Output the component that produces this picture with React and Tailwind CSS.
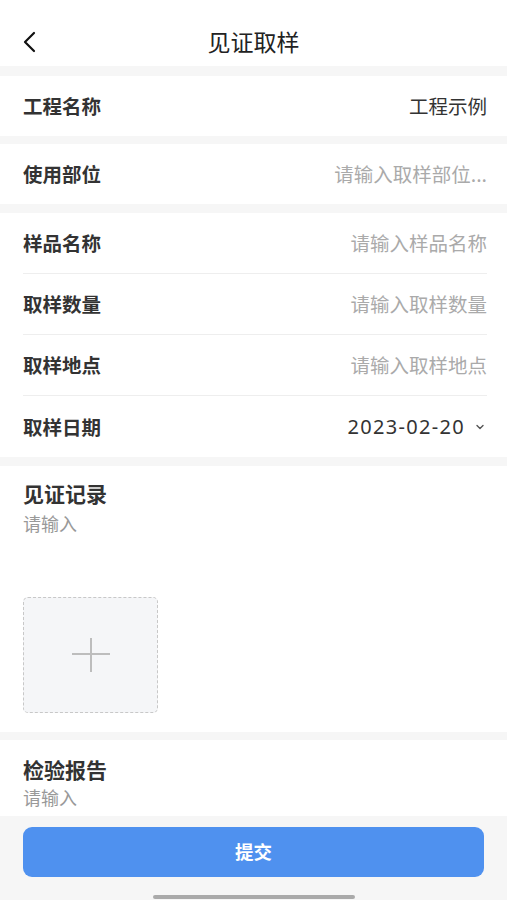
import React from 'react';

const FONT = { fontFamily: '"Noto Sans CJK SC", "Noto Sans", sans-serif' };

const Chevron = () => (
  <svg width="10" height="10" viewBox="0 0 10 10" className="ml-[10px] mr-[2px] text-[#555]">
    <path d="M2 3.5 L5 6.5 L8 3.5" fill="none" stroke="currentColor" strokeWidth="1.4" strokeLinecap="round" strokeLinejoin="round" />
  </svg>
);

const Row = ({ label, value, placeholder, last, h = 'h-[61px]', children }) => (
  <div className="pl-[23px] pr-[20px]">
    <div className={`${h} flex items-center justify-between ${last ? '' : 'border-b border-[#eeeeee]'}`}>
      <span className="text-[19.5px] font-bold text-[#333]">{label}</span>
      {children ? children : value ? (
        <span className="text-[19.5px] text-[#333]">{value}</span>
      ) : (
        <span className="text-[19.5px] text-[#aaa]">{placeholder}</span>
      )}
    </div>
  </div>
);

export default function App() {
  return (
    <div className="w-[507px] h-[900px] bg-[#f6f6f6] flex flex-col overflow-hidden" style={FONT}>
      {/* 顶部导航 */}
      <header className="h-[66px] bg-white grid grid-cols-[60px_1fr_60px] items-center pt-[16px] shrink-0">
        <div className="pl-[22px] pt-[1px]">
          <svg width="14" height="22" viewBox="0 0 14 22">
            <path d="M12 2 L3 11 L12 20" fill="none" stroke="#111" strokeWidth="2.2" strokeLinecap="round" strokeLinejoin="round" />
          </svg>
        </div>
        <h1 className="text-center text-[23px] leading-[30px] text-[#222]">见证取样</h1>
        <div />
      </header>

      <div className="mt-[10px] bg-white">
        <Row label="工程名称" value="工程示例" h="h-[60px]" last />
      </div>

      <div className="mt-[8px] bg-white">
        <Row label="使用部位" placeholder="请输入取样部位..." h="h-[60px]" last />
      </div>

      <div className="mt-[9px] bg-white">
        <Row label="样品名称" placeholder="请输入样品名称" />
        <Row label="取样数量" placeholder="请输入取样数量" />
        <Row label="取样地点" placeholder="请输入取样地点" />
        <Row label="取样日期" last>
          <span className="flex items-center text-[20px] text-[#333] tracking-[1.3px]" style={{ fontFamily: '"Noto Sans", sans-serif' }}>
            2023-02-20
            <Chevron />
          </span>
        </Row>
      </div>

      {/* 见证记录 */}
      <section className="mt-[9px] bg-white h-[266px] px-[23px] pt-[13px] shrink-0">
        <h2 className="text-[21px] font-bold text-[#333] leading-[28px]">见证记录</h2>
        <p className="text-[18px] text-[#999] leading-[26px] mt-[3px]">请输入</p>
        <div className="mt-[61px] w-[135px] h-[116px] rounded-[5px] border border-dashed border-[#c8c8c8] bg-[#f5f6f8] flex items-center justify-center">
          <svg width="38" height="34" viewBox="0 0 38 34">
            <path d="M19 0 V34 M0 16 H38" stroke="#bdbdbd" strokeWidth="2" />
          </svg>
        </div>
      </section>

      {/* 检验报告 */}
      <section className="mt-[8px] bg-white h-[76px] px-[23px] pt-[15px] shrink-0">
        <h2 className="text-[21px] font-bold text-[#333] leading-[28px]">检验报告</h2>
        <p className="text-[18px] text-[#999] leading-[26px] mt-[1px]">请输入</p>
      </section>

      {/* 底部提交 */}
      <footer className="flex-1 bg-[#f6f6f6] px-[23px] pt-[11px] flex flex-col items-center">
        <button className="w-full h-[50px] rounded-[9px] bg-[#4f91ef] text-white text-[18.5px] font-bold">
          提交
        </button>
        <div className="mt-[18px] w-[202px] h-[4px] rounded-full bg-[#aaaaaa]" />
      </footer>
    </div>
  );
}
